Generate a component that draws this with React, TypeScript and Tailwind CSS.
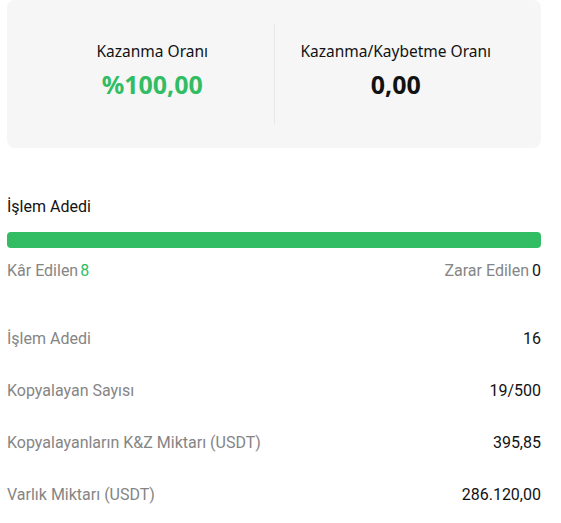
export default function App() {
  const rows = [
    { label: "İşlem Adedi", value: "16" },
    { label: "Kopyalayan Sayısı", value: "19/500" },
    { label: "Kopyalayanların K&Z Miktarı (USDT)", value: "395,85" },
    { label: "Varlık Miktarı (USDT)", value: "286.120,00" },
  ];
  return (
    <div className="w-[561px] h-[523px] bg-white overflow-hidden pl-[7px] pr-[20px]">
      <div className="flex h-[148px] rounded-[8px] bg-[#f6f6f6] px-6 py-6 font-['Noto_Sans',sans-serif]">
        <div className="flex flex-1 flex-col items-center pt-[15px]">
          <div className="text-[15.5px] leading-[24px] text-[#121212]">Kazanma Oranı</div>
          <div className="mt-[3px] text-[25px] leading-[36px] font-bold text-[#32bd65]">%100,00</div>
        </div>
        <div className="w-px bg-[#e8e8e8]" />
        <div className="flex flex-1 flex-col items-center pt-[15px]">
          <div className="text-[15.5px] leading-[24px] text-[#121212]">Kazanma/Kaybetme Oranı</div>
          <div className="mt-[3px] text-[25px] leading-[36px] font-bold text-[#121212]">0,00</div>
        </div>
      </div>
      <div className="font-['Roboto',sans-serif] text-[16px] leading-[24px]">
        <div className="mt-[47px] text-[#121212]">İşlem Adedi</div>
        <div className="mt-[13px] h-[16px] rounded-[4px] bg-[#32bd65]" />
        <div className="mt-[11px] flex justify-between">
          <div className="flex gap-[2px]">
            <span className="text-[#858585]">Kâr Edilen</span>
            <span className="text-[#32bd65]">8</span>
          </div>
          <div className="flex gap-[3px]">
            <span className="text-[#858585]">Zarar Edilen</span>
            <span className="text-[#121212]">0</span>
          </div>
        </div>
        <div className="mt-[30px] flex flex-col">
          {rows.map((r) => (
            <div key={r.label} className="flex h-[52px] items-center justify-between">
              <span className="text-[#858585]">{r.label}</span>
              <span className="text-[#121212]">{r.value}</span>
            </div>
          ))}
        </div>
      </div>
    </div>
  );
}
